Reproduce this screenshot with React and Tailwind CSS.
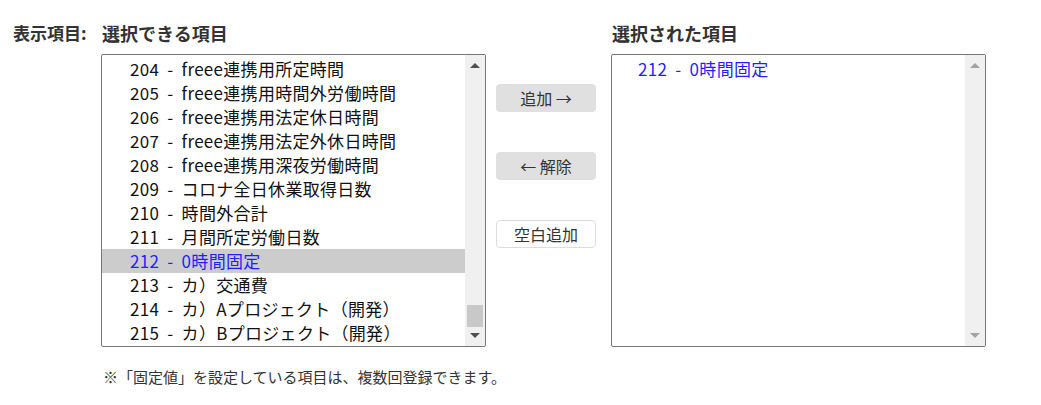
import React from 'react';

const FONT = { fontFamily: '"Noto Sans CJK JP", "Noto Sans", sans-serif' };

const available = [
  '204 - freee連携用所定時間',
  '205 - freee連携用時間外労働時間',
  '206 - freee連携用法定休日時間',
  '207 - freee連携用法定外休日時間',
  '208 - freee連携用深夜労働時間',
  '209 - コロナ全日休業取得日数',
  '210 - 時間外合計',
  '211 - 月間所定労働日数',
  '212 - 0時間固定',
  '213 - カ）交通費',
  '214 - カ）Aプロジェクト（開発）',
  '215 - カ）Bプロジェクト（開発）',
];

function Scrollbar({ active, thumb }) {
  return (
    <div className="w-[20px] bg-[#f0f0f0] flex flex-col items-center py-[8px] shrink-0">
      <div className={`w-0 h-0 border-x-[5px] border-x-transparent border-b-[5px] ${active ? 'border-b-[#505050]' : 'border-b-[#a3a3a3]'}`} />
      <div className="flex-1 w-full flex flex-col justify-end px-[2px] pb-[6px]">
        {thumb && <div className="h-[22px] bg-[#c8c8c8]" />}
      </div>
      <div className={`w-0 h-0 border-x-[5px] border-x-transparent border-t-[5px] ${active ? 'border-t-[#505050]' : 'border-t-[#a3a3a3]'}`} />
    </div>
  );
}

export default function App() {
  return (
    <div className="bg-white w-[1041px] h-[405px] pt-[22px] pl-[13px] text-[#333]" style={FONT}>
      <div className="flex">
        <div className="w-[88px] text-[17px] font-bold leading-[22px] text-[#333] whitespace-nowrap">表示項目:</div>

        <div className="w-[385px]">
          <div className="text-[18px] font-bold leading-[22px] mb-[10px] pl-[1px]">選択できる項目</div>
          <div className="h-[293px] border border-[#767676] rounded-[2px] flex overflow-hidden">
            <div className="flex-1 pt-[2px]">
              {available.map((t) => {
                const sel = t.startsWith('212');
                return (
                  <div
                    key={t}
                    className={`h-[24px] leading-[24px] pl-[28px] text-[17px] tracking-[0.3px] [word-spacing:4px] whitespace-nowrap ${
                      sel ? 'bg-[#cccccc] text-[#1f1fff]' : 'text-[#111]'
                    }`}
                  >
                    {t}
                  </div>
                );
              })}
            </div>
            <Scrollbar active thumb />
          </div>
        </div>

        <div className="w-[100px] ml-[10px] mr-[15px] pt-[62px] flex flex-col gap-[40px]">
          <button className="h-[28px] rounded-[4px] bg-[#e0e0e0] text-[16px] text-[#333]">追加 →</button>
          <button className="h-[28px] rounded-[4px] bg-[#e0e0e0] text-[16px] text-[#333]">← 解除</button>
          <button className="h-[28px] rounded-[4px] bg-white border border-[#dddddd] text-[16px] text-[#333]">空白追加</button>
        </div>

        <div className="w-[375px]">
          <div className="text-[18px] font-bold leading-[22px] mb-[10px] pl-[1px]">選択された項目</div>
          <div className="h-[293px] border border-[#767676] rounded-[2px] flex overflow-hidden">
            <div className="flex-1 pt-[2px]">
              <div className="h-[24px] leading-[24px] pl-[26px] text-[17px] tracking-[0.3px] [word-spacing:4px] text-[#1f1fff] whitespace-nowrap">212 - 0時間固定</div>
            </div>
            <Scrollbar />
          </div>
        </div>
      </div>

      <div className="ml-[90px] mt-[19px] text-[15px] leading-[22px] text-[#333]">
        ※「固定値」を設定している項目は、複数回登録できます。
      </div>
    </div>
  );
}
